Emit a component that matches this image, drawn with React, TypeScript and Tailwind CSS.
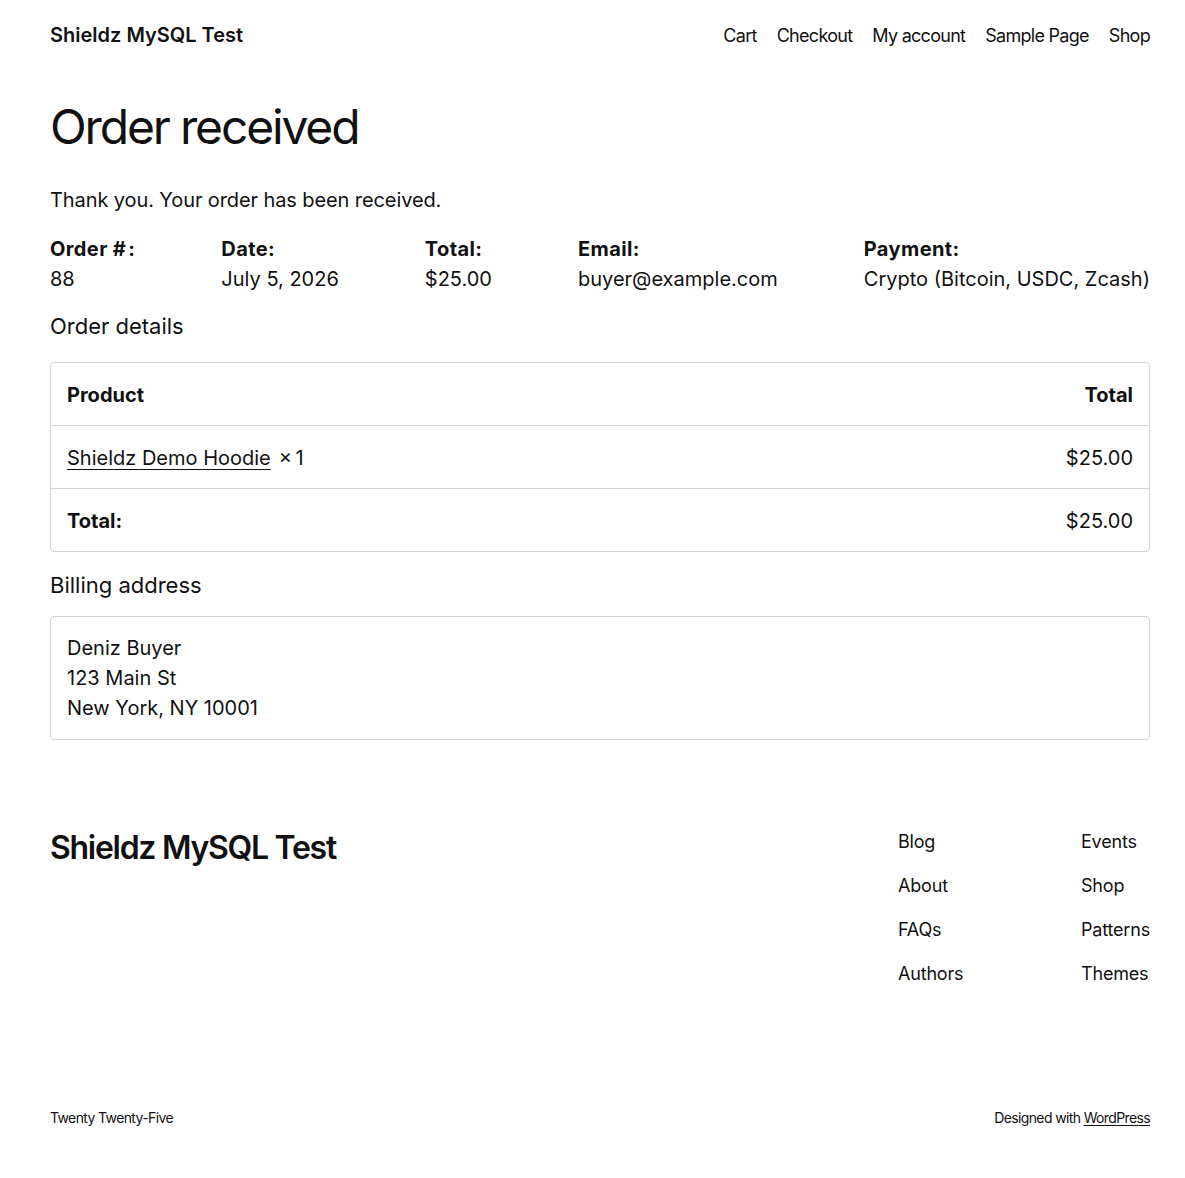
import React from "react";

const font = { fontFamily: "Inter, 'Noto Sans', sans-serif" };

export default function App() {
  return (
    <div className="min-h-[1178px] w-[1200px] bg-white text-[#111111]" style={font}>
      <div className="mx-[50px]">
        {/* Header */}
        <header className="flex items-center justify-between h-[70px]">
          <div className="text-[20px] font-semibold tracking-[0em]">Shieldz MySQL Test</div>
          <nav className="flex gap-[20px] text-[18px] tracking-[-0.04em]">
            <span>Cart</span>
            <span>Checkout</span>
            <span>My account</span>
            <span>Sample Page</span>
            <span>Shop</span>
          </nav>
        </header>

        <h1 className="mt-[28px] text-[48px] leading-[1.2] tracking-[-0.045em] font-normal">Order received</h1>

        <p className="mt-[29px] text-[20px] leading-[30px] tracking-[-0.005em]">Thank you. Your order has been received.</p>

        <ul className="mt-[19px] flex justify-between text-[20px] leading-[30px]">
          <li>
            <div className="font-bold tracking-[0.02em]">Order #&#8202;:</div>
            <div>88</div>
          </li>
          <li>
            <div className="font-bold tracking-[0.02em]">Date:</div>
            <div>July 5, 2026</div>
          </li>
          <li>
            <div className="font-bold tracking-[0.02em]">Total:</div>
            <div>$25.00</div>
          </li>
          <li>
            <div className="font-bold tracking-[0.02em]">Email:</div>
            <div>buyer@example.com</div>
          </li>
          <li>
            <div className="font-bold tracking-[0.02em]">Payment:</div>
            <div>Crypto (Bitcoin, USDC, Zcash)</div>
          </li>
        </ul>

        <h2 className="mt-[17px] text-[22px] leading-[30px]">Order details</h2>

        <div className="mt-[21px] border border-[#d4d4d4] rounded-[4px] text-[20px]">
          <div className="flex justify-between items-center h-[63px] px-[16px] pt-[3px] font-bold border-b border-[#d4d4d4]">
            <span>Product</span>
            <span>Total</span>
          </div>
          <div className="flex justify-between items-center h-[63px] px-[16px] pt-[2px] border-b border-[#d4d4d4]">
            <span>
              <span className="underline underline-offset-[4px] decoration-1">Shieldz Demo Hoodie</span>
              <span className="ml-[8px]">×&#8201;1</span>
            </span>
            <span>$25.00</span>
          </div>
          <div className="flex justify-between items-center h-[62px] px-[16px] pt-[2px]">
            <span className="font-bold">Total:</span>
            <span>$25.00</span>
          </div>
        </div>

        <h2 className="mt-[18px] text-[22px] leading-[30px]">Billing address</h2>

        <div className="mt-[16px] border border-[#d4d4d4] rounded-[4px] px-[16px] py-[16px] text-[20px] leading-[30px]">
          <div>Deniz Buyer</div>
          <div>123 Main St</div>
          <div>New York, NY 10001</div>
        </div>

        {/* Footer */}
        <footer className="mt-[80px]">
          <div className="flex justify-between">
            <div className="text-[32px] font-semibold tracking-[-0.04em] leading-[1.2] mt-[9px]">Shieldz MySQL Test</div>
            <div className="flex gap-[120px] text-[18px] tracking-[-0.01em] mt-[8px]">
              <div className="flex flex-col gap-[17px] leading-[27px] w-[63px]">
                <span>Blog</span>
                <span>About</span>
                <span>FAQs</span>
                <span>Authors</span>
              </div>
              <div className="flex flex-col gap-[17px] leading-[27px]">
                <span>Events</span>
                <span>Shop</span>
                <span>Patterns</span>
                <span>Themes</span>
              </div>
            </div>
          </div>
          <div className="flex justify-between mt-[120px] text-[14px] tracking-[-0.045em] pb-[40px]">
            <span>Twenty Twenty-Five</span>
            <span>
              Designed with <span className="underline underline-offset-2">WordPress</span>
            </span>
          </div>
        </footer>
      </div>
    </div>
  );
}
